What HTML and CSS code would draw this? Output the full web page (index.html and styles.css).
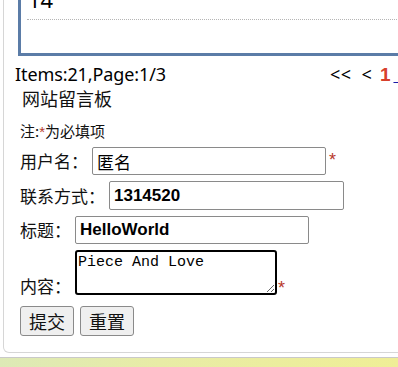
FILE: index.html
```html
<!DOCTYPE html>
<html lang="zh">
<head>
<meta charset="utf-8">
<title>网站留言板</title>
<link rel="stylesheet" href="styles.css">
</head>
<body>
<div class="card">
  <div class="list">
    <div class="item">14</div>
  </div>
  <div class="pager-row">
    <span class="count">Items:21,Page:1/3</span>
    <span class="pager"><span class="nav nav-first">&lt;&lt;</span><span class="nav nav-prev">&lt;</span><b class="current">1</b><a class="link" href="#">&nbsp;2</a><a class="link" href="#">3</a></span>
  </div>
  <form class="board">
    <div class="title">网站留言板</div>
    <div class="note">注:<span class="req">*</span>为必填项</div>
    <div class="row row-first">
      <span class="label">用户名：</span>
      <input class="field w1 plain" type="text" value="匿名">
      <span class="req req-top">*</span>
    </div>
    <div class="row">
      <span class="label">联系方式：</span>
      <input class="field w2" type="text" value="1314520">
    </div>
    <div class="row">
      <span class="label">标题：</span>
      <input class="field w3" type="text" value="HelloWorld">
    </div>
    <div class="row row-area">
      <span class="label">内容：</span>
      <textarea class="area">Piece And Love</textarea>
      <span class="req req-area">*</span>
    </div>
    <div class="buttons">
      <button class="btn" type="button">提交</button>
      <button class="btn" type="button">重置</button>
    </div>
  </form>
</div>
<div class="footer"></div>
</body>
</html>
```
FILE: styles.css
```css
html, body {
  margin: 0;
  padding: 0;
  background: #ffffff;
  overflow: hidden;
}
body {
  font-family: "Noto Sans", "Noto Sans CJK SC", sans-serif;
  color: #111;
}
.card {
  margin-left: 3px;
  width: 470px;
  border: 1px solid #d6d6d6;
  border-top: none;
  border-radius: 0 0 6px 6px;
  padding-bottom: 16px;
  background: #fff;
}
.list {
  display: flow-root;
  margin-left: 14px;
  height: 53px;
  border: 3px solid #5b7ca7;
  border-top: none;
}
.item {
  box-sizing: border-box;
  margin-top: -12px;
  margin-left: 6px;
  height: 32px;
  padding-left: 1px;
  border-bottom: 1px dotted #b5b5b5;
  font-family: "Noto Sans", sans-serif;
  font-size: 22px;
  line-height: 22px;
  color: #000;
}
.pager-row {
  display: flex;
  align-items: baseline;
  padding-left: 11px;
  margin-top: 6px;
  font-size: 18px;
  line-height: 24px;
  color: #000;
}
.count {
  flex: none;
  width: 315px;
  letter-spacing: -0.1px;
  white-space: nowrap;
}
.pager {
  display: flex;
  align-items: baseline;
  white-space: nowrap;
  font-family: "Noto Sans", sans-serif;
  font-size: 18px;
}
.nav {
  color: #000;
}
.nav-first {
  letter-spacing: 0.5px;
}
.nav-prev {
  margin-left: 10px;
}
.current {
  color: #d7402c;
  font-family: "Liberation Sans", sans-serif;
  font-size: 19px;
  font-weight: bold;
  margin-left: 8px;
}
.link {
  color: #1a1aa6;
  margin-left: 3px;
}
.board {
  margin: 0;
  padding-left: 16px;
  font-family: "Noto Sans CJK SC", sans-serif;
  color: #111;
}
.title {
  margin-top: -1px;
  padding-left: 2px;
  font-size: 18px;
  line-height: 24px;
}
.note {
  margin-top: 11px;
  font-size: 15px;
  line-height: 20px;
}
.req {
  color: #b8392c;
  font-family: "Liberation Sans", sans-serif;
}
.row {
  display: flex;
  align-items: center;
  margin-top: 6px;
  font-size: 17px;
  line-height: 22px;
}
.row-first {
  margin-top: 5px;
}
.label {
  margin-right: 4px;
}
.field {
  box-sizing: border-box;
  height: 28px;
  margin: 0;
  border: 1px solid #8a8a8a;
  border-radius: 2px;
  padding: 0 4px;
  font-family: "Liberation Sans", "Noto Sans CJK SC", sans-serif;
  font-size: 17px;
  font-weight: bold;
  color: #000;
  background: #fff;
}
.field.plain {
  font-family: "Noto Sans CJK SC", sans-serif;
  font-weight: normal;
}
.w1 { width: 234px; }
.w2 { width: 235px; height: 29px; }
.w3 { width: 234px; }
.row .req {
  margin-left: 3px;
  font-size: 18px;
  line-height: 20px;
}
.row .req-top {
  align-self: flex-start;
  margin-top: 3px;
}
.row-area {
  align-items: flex-end;
  margin-top: 6px;
}
.row-area .label {
  line-height: 20px;
  margin-bottom: -1px;
}
.area {
  box-sizing: border-box;
  width: 202px;
  height: 45px;
  margin: 0;
  border: 2px solid #000;
  border-radius: 3px;
  padding: 2px 1px;
  font-family: "Liberation Mono", monospace;
  font-size: 15px;
  line-height: 17px;
  color: #000;
  resize: both;
}
.row .req-area {
  margin-left: 1px;
  line-height: 18px;
  margin-bottom: -2px;
}
.buttons {
  display: flex;
  gap: 6px;
  margin-top: 11px;
}
.btn {
  box-sizing: border-box;
  width: 54px;
  height: 30px;
  padding: 0;
  border: 1px solid #8a8a8a;
  border-radius: 3px;
  background: #efefef;
  font-family: "Noto Sans CJK SC", sans-serif;
  font-size: 18px;
  color: #111;
}
.footer {
  margin-top: 4px;
  height: 20px;
  border-top: 1px solid #c9c9c9;
  background: linear-gradient(to right, #dde9b6 0%, #e8eca6 40%, #efee96 100%);
}
```
